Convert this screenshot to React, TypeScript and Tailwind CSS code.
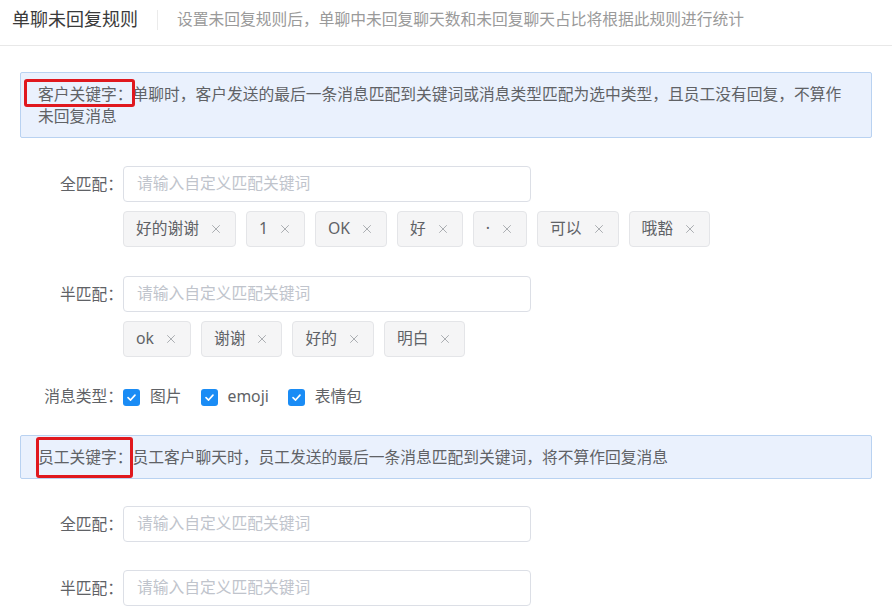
import { X } from "lucide-react";

const font = { fontFamily: '"Noto Sans", "Noto Sans CJK SC", sans-serif' };

const Tag = ({ text }: { text: string }) => (
  <div className="flex items-center h-[36px] pl-[12px] pr-[12px] gap-[10px] bg-[#f5f5f6] border border-[#e4e5e8] rounded-[4px] text-[#606266]">
    <span>{text}</span>
    <X size={14} strokeWidth={1.5} className="text-[#a0a3a8]" />
  </div>
);

const InputRow = ({ label, tags }: { label: string; tags?: string[] }) => (
  <div className="flex">
    <div className="w-[123px] shrink-0 text-right h-[36px] leading-[36px] text-[#606266]">{label}</div>
    <div className="flex flex-col gap-[9px]">
      <div className="w-[408px] h-[36px] border border-[#dcdfe6] rounded-[4px] flex items-center px-[13px] text-[#c0c4cc]">
        请输入自定义匹配关键词
      </div>
      {tags && (
        <div className="flex gap-[10px]">
          {tags.map((t) => (
            <Tag key={t} text={t} />
          ))}
        </div>
      )}
    </div>
  </div>
);

const Check = ({ label }: { label: string }) => (
  <div className="flex items-center gap-[10px]">
    <div className="w-[17px] h-[17px] rounded-[3px] bg-[#1a8cf5] flex items-center justify-center">
      <svg width="11" height="11" viewBox="0 0 12 12" fill="none">
        <path d="M2.2 6.2 L5 8.8 L9.8 3.4" stroke="white" strokeWidth="1.8" strokeLinecap="round" strokeLinejoin="round" />
      </svg>
    </div>
    <span className="text-[#606266]">{label}</span>
  </div>
);

const Alert = ({ children, mark }: { children: React.ReactNode; mark: string }) => (
  <div className="relative mx-[20px] bg-[#eaf1fd] border border-[#b9d2f1] rounded-[2px] px-[17px] py-[10px] leading-[22px] text-[#606266]">
    {children}
    <div className={`absolute border-[3px] border-[#e0181e] rounded-[3px] ${mark}`} />
  </div>
);

export default function App() {
  return (
    <div className="w-[892px] h-[616px] bg-white overflow-hidden text-[15.75px]" style={font}>
      <div className="h-[46px] pb-[6px] flex items-center px-[12px] border-b border-[#e8e8e8]">
        <span className="text-[18px] text-[#3a3a3a]">单聊未回复规则</span>
        <div className="w-px h-[20px] bg-[#ebebeb] mx-[19px]" />
        <span className="text-[#9a9a9a]">设置未回复规则后，单聊中未回复聊天数和未回复聊天占比将根据此规则进行统计</span>
      </div>

      <div className="mt-[26px]">
        <Alert mark="left-[3px] top-[6px] w-[111px] h-[28px]">
          客户关键字：单聊时，客户发送的最后一条消息匹配到关键词或消息类型匹配为选中类型，且员工没有回复，不算作未回复消息
        </Alert>
      </div>

      <div className="mt-[28px] flex flex-col gap-[29px]">
        <InputRow label="全匹配：" tags={["好的谢谢", "1", "OK", "好", "·", "可以", "哦豁"]} />
        <InputRow label="半匹配：" tags={["ok", "谢谢", "好的", "明白"]} />
      </div>

      <div className="mt-[22px] flex h-[36px] items-center">
        <div className="w-[123px] shrink-0 text-right text-[#606266]">消息类型：</div>
        <div className="flex gap-[19px]">
          <Check label="图片" />
          <Check label="emoji" />
          <Check label="表情包" />
        </div>
      </div>

      <div className="mt-[20px]">
        <Alert mark="left-[15px] top-[1px] w-[97px] h-[41px]">
          员工关键字：员工客户聊天时，员工发送的最后一条消息匹配到关键词，将不算作回复消息
        </Alert>
      </div>

      <div className="mt-[27px] flex flex-col gap-[28px]">
        <InputRow label="全匹配：" />
        <InputRow label="半匹配：" />
      </div>
    </div>
  );
}
